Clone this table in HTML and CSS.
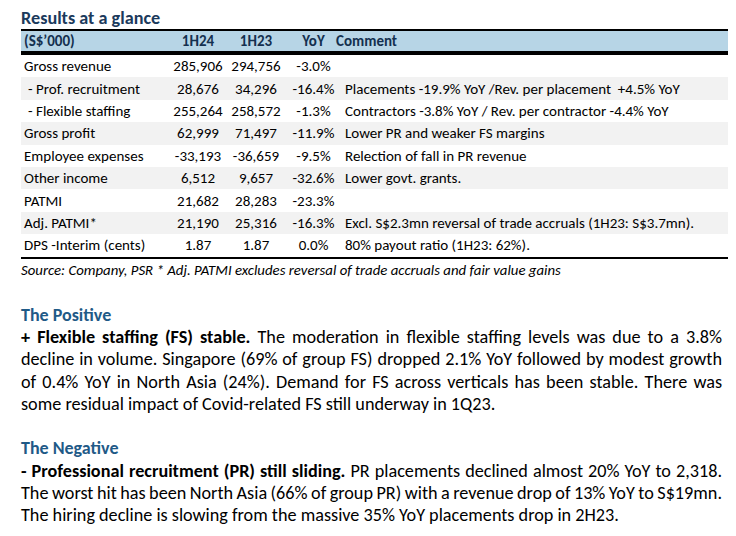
FILE: index.html
```html
<!DOCTYPE html>
<html>
<head>
<meta charset="utf-8">
<link rel="stylesheet" href="styles.css">
</head>
<body>
<div class="page">
  <h2 class="title">Results at a glance</h2>
  <table class="results">
    <thead>
      <tr>
        <th class="c-label">(S$’000)</th>
        <th class="c-num1">1H24</th>
        <th class="c-num2">1H23</th>
        <th class="c-yoy">YoY</th>
        <th class="c-comment">Comment</th>
      </tr>
    </thead>
    <tbody>
      <tr><td class="c-label">Gross revenue</td><td>285,906</td><td>294,756</td><td class="c-yoy">-3.0%</td><td class="c-comment"></td></tr>
      <tr class="alt"><td class="c-label sub">- Prof. recruitment</td><td>28,676</td><td>34,296</td><td class="c-yoy">-16.4%</td><td class="c-comment">Placements -19.9% YoY /Rev. per placement&nbsp; +4.5% YoY</td></tr>
      <tr><td class="c-label sub">- Flexible staffing</td><td>255,264</td><td>258,572</td><td class="c-yoy">-1.3%</td><td class="c-comment">Contractors -3.8% YoY / Rev. per contractor -4.4% YoY</td></tr>
      <tr class="alt"><td class="c-label">Gross profit</td><td>62,999</td><td>71,497</td><td class="c-yoy">-11.9%</td><td class="c-comment">Lower PR and weaker FS margins</td></tr>
      <tr><td class="c-label">Employee expenses</td><td>-33,193</td><td>-36,659</td><td class="c-yoy">-9.5%</td><td class="c-comment">Relection of fall in PR revenue</td></tr>
      <tr class="alt"><td class="c-label">Other income</td><td>6,512</td><td>9,657</td><td class="c-yoy">-32.6%</td><td class="c-comment">Lower govt. grants.</td></tr>
      <tr><td class="c-label">PATMI</td><td>21,682</td><td>28,283</td><td class="c-yoy">-23.3%</td><td class="c-comment"></td></tr>
      <tr class="alt"><td class="c-label">Adj. PATMI*</td><td>21,190</td><td>25,316</td><td class="c-yoy">-16.3%</td><td class="c-comment">Excl. S$2.3mn reversal of trade accruals (1H23: S$3.7mn).</td></tr>
      <tr><td class="c-label">DPS -Interim (cents)</td><td>1.87</td><td>1.87</td><td class="c-yoy">0.0%</td><td class="c-comment">80% payout ratio (1H23: 62%).</td></tr>
    </tbody>
  </table>
  <p class="source">Source: Company, PSR * Adj. PATMI excludes reversal of trade accruals and fair value gains</p>

  <h3 class="section">The Positive</h3>
  <p class="body">
    <span class="line"><b>+ Flexible staffing (FS) stable.</b> The moderation in flexible staffing levels was due to a 3.8%</span>
    <span class="line">decline in volume. Singapore (69% of group FS) dropped 2.1% YoY followed by modest growth</span>
    <span class="line">of 0.4% YoY in North Asia (24%). Demand for FS across verticals has been stable. There was</span>
    <span class="line last">some residual impact of Covid-related FS still underway in 1Q23.</span>
  </p>

  <h3 class="section">The Negative</h3>
  <p class="body">
    <span class="line"><b>- Professional recruitment (PR) still sliding.</b> PR placements declined almost 20% YoY to 2,318.</span>
    <span class="line tight">The worst hit has been North Asia (66% of group PR) with a revenue drop of 13% YoY to S$19mn.</span>
    <span class="line last">The hiring decline is slowing from the massive 35% YoY placements drop in 2H23.</span>
  </p>
</div>
</body>
</html>
```
FILE: styles.css
```css
html, body {
  margin: 0;
  padding: 0;
  background: #ffffff;
}
body {
  font-family: Carlito, Lato, "Liberation Sans", sans-serif;
  color: #000000;
}
.page {
  width: 707px;
  padding: 8px 0 0 21px;
}
.title {
  margin: 0;
  font-size: 18.2px;
  line-height: 21px;
  font-weight: 700;
  color: #1b3a5c;
}
.results {
  width: 707px;
  border-collapse: collapse;
  border-top: 2px solid #000;
  border-bottom: 2px solid #000;
  font-size: 15px;
  table-layout: fixed;
}
.results th,
.results td {
  padding: 0;
  text-align: center;
  white-space: nowrap;
}
.results th {
  background: #b7d5e6;
  color: #14304f;
  font-weight: 700;
  height: 20px;
  border-bottom: 4px solid #000;
}
.results td {
  height: 22.4px;
}
.results .c-label {
  width: 146px;
  text-align: left;
  padding-left: 3px;
}
.results .c-num1 { width: 56px; }
.results .c-num2 { width: 60px; }
.results .c-yoy {
  width: 45px;
  padding-left: 5px;
}
.results th.c-comment {
  text-align: left;
  padding-left: 0;
}
.results td.c-comment {
  text-align: left;
  padding-left: 9px;
}
.results td.sub {
  padding-left: 7px;
}
.results tr.alt td {
  background: #f2f2f2;
}
.source {
  margin: 3px 0 0 0;
  font-size: 14.8px;
  font-style: italic;
  line-height: 17px;
}
.section {
  margin: 25px 0 0 0;
  font-size: 18px;
  font-weight: 700;
  line-height: 22.5px;
  color: #1f5a87;
}
.body {
  margin: 0;
  width: 701px;
  font-size: 18.2px;
  line-height: 22.4px;
}
.line {
  display: block;
  white-space: nowrap;
  text-align: justify;
  text-align-last: justify;
}
.line.tight {
  word-spacing: -0.8px;
}
.line.last {
  text-align-last: left;
}
.body + .section {
  margin-top: 21.5px;
}
```
